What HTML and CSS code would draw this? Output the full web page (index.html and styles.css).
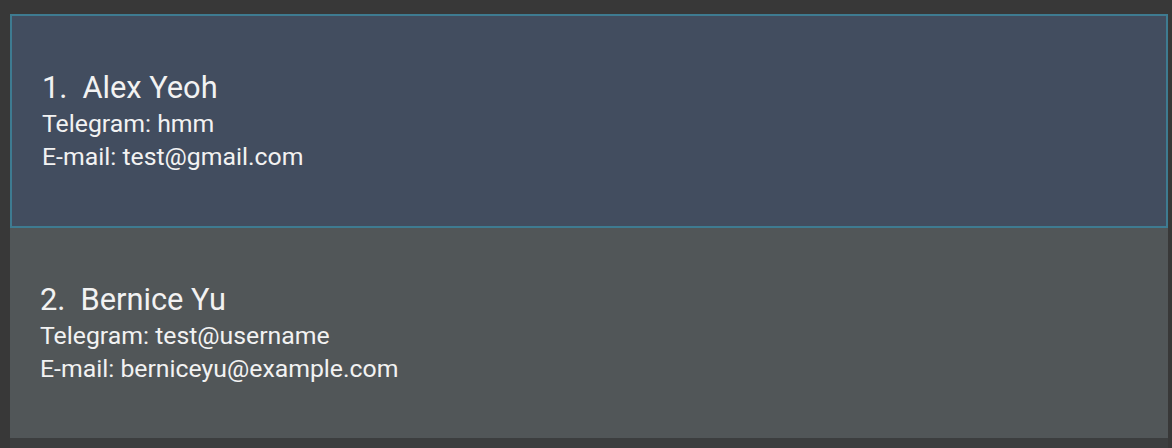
FILE: index.html
```html
<!DOCTYPE html>
<html>
<head>
<meta charset="utf-8">
<link rel="stylesheet" href="styles.css">
</head>
<body>
<div class="app">
  <div class="list">
    <div class="card selected">
      <div class="name-row"><span class="idx">1.</span><span class="name">Alex Yeoh</span></div>
      <div class="small">Telegram: hmm</div>
      <div class="small">E-mail: test@gmail.com</div>
    </div>
    <div class="card">
      <div class="name-row"><span class="idx">2.</span><span class="name">Bernice Yu</span></div>
      <div class="small">Telegram: test@username</div>
      <div class="small">E-mail: berniceyu@example.com</div>
    </div>
  </div>
</div>
</body>
</html>
```
FILE: styles.css
```css
html, body {
  margin: 0;
  padding: 0;
  background: #383838;
}
.app {
  padding: 14px 4px 0 10px;
  height: 448px;
  box-sizing: border-box;
}
.list {
  background: #3c3e3f;
  height: 100%;
  display: flex;
  flex-direction: column;
}
.card {
  height: 210px;
  flex: none;
  box-sizing: border-box;
  background: #515658;
  display: flex;
  flex-direction: column;
  justify-content: center;
  padding-left: 30px;
  font-family: "Roboto", sans-serif;
  color: #f2f2f2;
}
.card.selected {
  height: 214px;
  background: #424d5f;
  border: 2px solid #3e7b91;
}
.name-row {
  display: flex;
  gap: 15px;
  font-size: 30.8px;
  line-height: 38px;
}
.small {
  font-size: 24.8px;
  line-height: 33px;
}
```
